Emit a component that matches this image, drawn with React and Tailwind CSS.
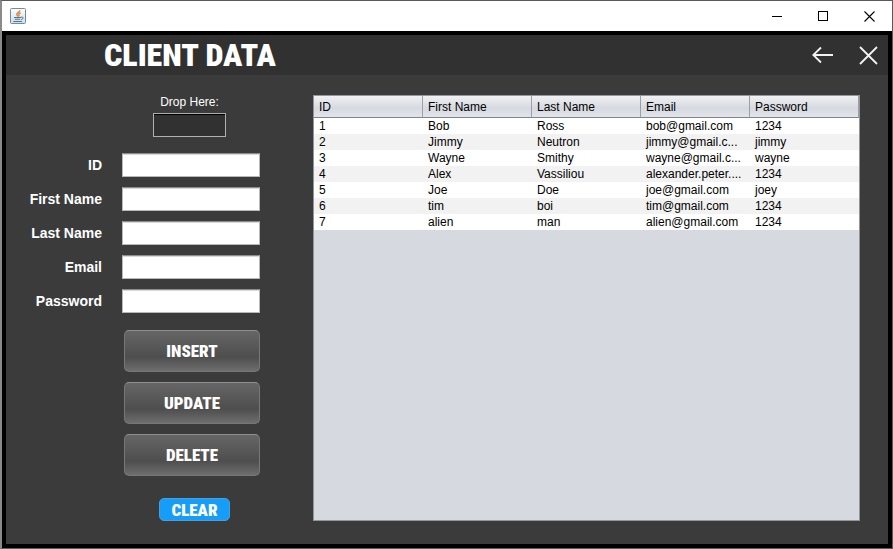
import React from "react";

const clients = [
  ["1", "Bob", "Ross", "bob@gmail.com", "1234"],
  ["2", "Jimmy", "Neutron", "jimmy@gmail.c...", "jimmy"],
  ["3", "Wayne", "Smithy", "wayne@gmail.c...", "wayne"],
  ["4", "Alex", "Vassiliou", "alexander.peter....", "1234"],
  ["5", "Joe", "Doe", "joe@gmail.com", "joey"],
  ["6", "tim", "boi", "tim@gmail.com", "1234"],
  ["7", "alien", "man", "alien@gmail.com", "1234"],
];

const columns = ["ID", "First Name", "Last Name", "Email", "Password"];

const fields = [
  { id: "client-id", label: "ID" },
  { id: "first-name", label: "First Name" },
  { id: "last-name", label: "Last Name" },
  { id: "email", label: "Email" },
  { id: "password", label: "Password" },
];

function JavaIcon() {
  return (
    <svg width="16" height="16" viewBox="0 0 16 16" aria-hidden="true">
      <defs>
        <linearGradient id="tile" x1="0" y1="0" x2="0" y2="1">
          <stop offset="0" stopColor="#fdfdfd" />
          <stop offset="1" stopColor="#cfdde6" />
        </linearGradient>
      </defs>
      <rect x="0.5" y="0.5" width="15" height="15" rx="1" fill="url(#tile)" stroke="#6f8ca3" />
      <path d="M10 2.4c-.6 1.6-3.2 2.200-3.200 3.800 0 .9.8 1.200.8 2.200M10.800 4.800c-1.500.5-2.300 1-1.900 1.900.3.7 0 1.300-.6 1.700" fill="none" stroke="#e2792f" strokeWidth="1.3" />
      <path d="M4 9.500h7M4.800 11.300h5.400M3.400 13.500h8.600" fill="none" stroke="#4f7590" strokeWidth="1.1" />
      <path d="M11 9.200c2.800-.8 2.800 1.800.2 2.400" fill="none" stroke="#4f7590" strokeWidth="1" />
    </svg>
  );
}

function TitleBar() {
  return (
    <div className="flex h-[30px] shrink-0 items-center justify-between bg-white pl-2">
      <JavaIcon />
      <div className="flex h-full">
        <button aria-label="Minimize" className="flex w-[46px] items-center justify-center">
          <svg width="11" height="11" viewBox="0 0 11 11" shapeRendering="crispEdges">
            <path d="M0 5.5h10" stroke="#000" />
          </svg>
        </button>
        <button aria-label="Maximize" className="flex w-[46px] items-center justify-center">
          <svg width="10" height="10" viewBox="0 0 10 10" shapeRendering="crispEdges">
            <rect x="0.5" y="0.5" width="9" height="9" fill="none" stroke="#000" />
          </svg>
        </button>
        <button aria-label="Close window" className="flex w-[46px] items-center justify-center">
          <svg width="11" height="11" viewBox="0 0 11 11">
            <path d="M0.5 0.5l10 10M10.5 0.5l-10 10" stroke="#000" strokeWidth="1.1" />
          </svg>
        </button>
      </div>
    </div>
  );
}

function Header() {
  return (
    <header className="flex h-10 shrink-0 items-center justify-between bg-[#313131] pr-[10px] pl-[98px]">
      <h1 className="font-['Roboto_Condensed','Open_Sans_Condensed',sans-serif] text-[32px] leading-10 font-black text-white">
        CLIENT DATA
      </h1>
      <div className="flex items-center gap-[25px]">
        <button aria-label="Back">
          <svg width="22" height="18" viewBox="0 0 22 18" fill="none" stroke="#f2f2f2" strokeWidth="1.8">
            <path d="M21 9H1.500M9 1.500L1.300 9L9 16.500" />
          </svg>
        </button>
        <button aria-label="Close">
          <svg width="19" height="19" viewBox="0 0 19 19" fill="none" stroke="#f2f2f2" strokeWidth="1.8">
            <path d="M1 1l17 17M18 1L1 18" />
          </svg>
        </button>
      </div>
    </header>
  );
}

function ActionButton({ children }) {
  return (
    <button className="h-[42px] w-[136px] rounded-[5px] border border-[#777] border-t-[#909090] bg-linear-to-b from-[#666] via-[#4e4e4e] via-65% to-[#6e6e6e] font-['Roboto_Condensed','Open_Sans_Condensed',sans-serif] text-[17px] leading-5 font-black text-white">
      {children}
    </button>
  );
}

function ClientForm() {
  return (
    <form className="flex w-[254px] shrink-0 flex-col items-end pt-5" onSubmit={(e) => e.preventDefault()}>
      <div className="mr-[34px] flex flex-col items-center gap-[4px]">
        <label htmlFor="drop" className="text-[12px] leading-[14px] text-white">
          Drop Here:
        </label>
        <input
          id="drop"
          className="h-6 w-[73px] border border-[#b0b0b0] bg-[#313131] text-white shadow-[inset_0_1px_0_#000]"
        />
      </div>
      <div className="mt-4 flex w-full flex-col gap-[10px]">
        {fields.map((f) => (
          <div key={f.id} className="flex items-center justify-end gap-5">
            <label htmlFor={f.id} className="text-[14px] leading-6 font-bold text-white">
              {f.label}
            </label>
            <input
              id={f.id}
              className="h-6 w-[138px] border border-[#b8b8b8] border-t-[#8c8c8c] bg-white px-1 text-[12px] text-black shadow-[inset_0_1px_0_#d8d8d8]"
            />
          </div>
        ))}
      </div>
      <div className="mt-[17px] flex flex-col gap-[10px]">
        <ActionButton>INSERT</ActionButton>
        <ActionButton>UPDATE</ActionButton>
        <ActionButton>DELETE</ActionButton>
      </div>
      <button className="mt-[22px] mr-[30px] h-[23px] w-[71px] rounded-[5px] border border-[#4f9fd4] bg-[#159dfb] font-['Roboto_Condensed','Open_Sans_Condensed',sans-serif] text-[17px] leading-5 font-black text-white">
        CLEAR
      </button>
    </form>
  );
}

function ClientTable() {
  return (
    <div className="min-w-0 flex-1 border border-[#93959d] bg-[#d6d9e0]">
      <table className="w-full table-fixed border-separate border-spacing-0 text-left text-[12px] leading-4 text-black">
        <thead>
          <tr className="h-[22px] bg-linear-to-b from-[#f0f1f4] via-[#d6d9e0] via-55% to-[#e4e6eb]">
            {columns.map((c) => (
              <th
                key={c}
                scope="col"
                className="border-r border-b border-[#9b9fa8] border-b-[#7c828e] px-[5px] py-0 font-normal whitespace-nowrap"
              >
                {c}
              </th>
            ))}
          </tr>
        </thead>
        <tbody>
          {clients.map((row) => (
            <tr key={row[0]} className="h-4 bg-white even:bg-[#f2f2f2]">
              {row.map((cell, i) => (
                <td key={i} className="px-[5px] py-0 whitespace-nowrap">
                  {cell}
                </td>
              ))}
            </tr>
          ))}
        </tbody>
      </table>
    </div>
  );
}

export default function App() {
  return (
    <div className="flex min-h-screen flex-col border-t border-r border-b border-l-2 border-[#5a5a5a] border-l-[#8a8a8a] font-['Liberation_Sans',Arial,sans-serif]">
      <TitleBar />
      <main className="flex flex-1 flex-col border-4 border-black bg-[#3b3b3b]">
        <Header />
        <div className="flex flex-1 gap-[53px] pr-7">
          <ClientForm />
          <div className="flex min-w-0 flex-1 pt-5 pb-[23px]">
            <ClientTable />
          </div>
        </div>
      </main>
    </div>
  );
}
